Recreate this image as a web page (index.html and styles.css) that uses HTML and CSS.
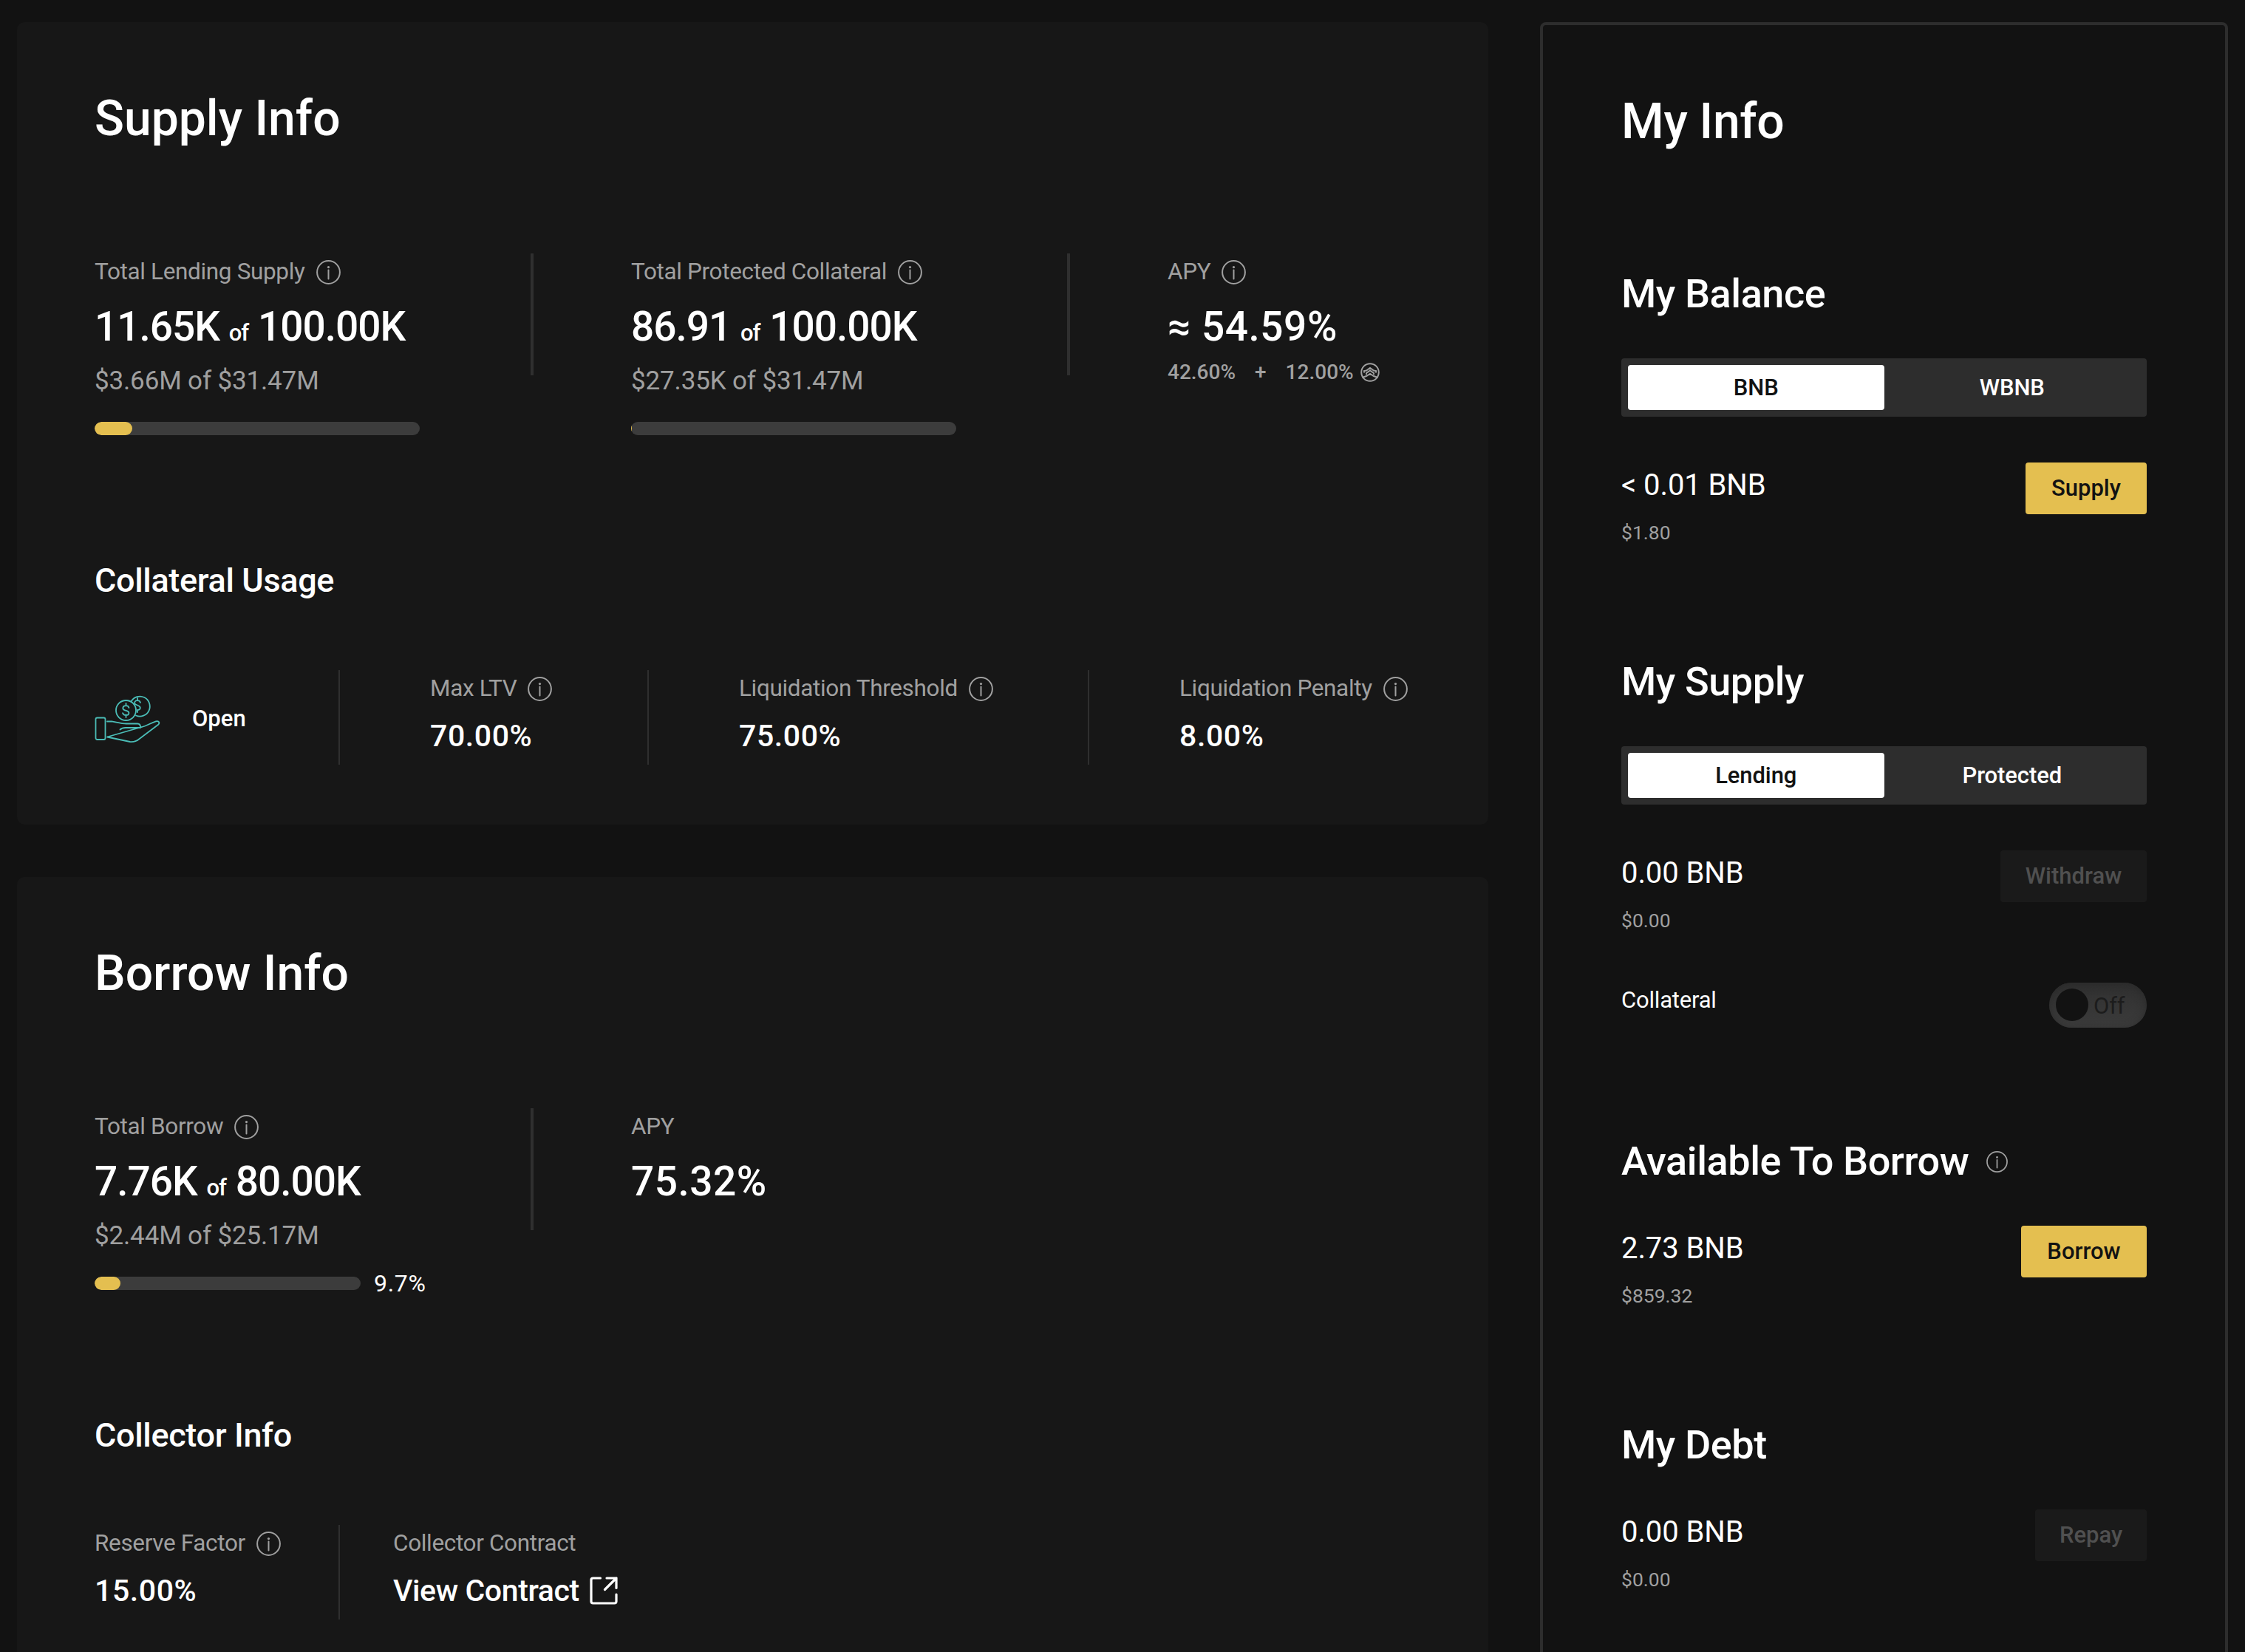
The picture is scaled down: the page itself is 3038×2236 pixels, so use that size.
FILE: index.html
```html
<!DOCTYPE html>
<html lang="en">
<head>
    <meta charset="UTF-8">
    <meta name="viewport" content="width=device-width, initial-scale=1.0">
    <title>BNB Market</title>
    <link rel="stylesheet" href="styles.css">
</head>
<body>
    <svg class="sprite">
        <symbol id="info" viewBox="0 0 33 33">
            <circle cx="16.5" cy="16.5" r="15.4" fill="none" stroke="currentColor" stroke-width="2"/>
            <circle cx="16.5" cy="9.6" r="1.6" fill="currentColor"/>
            <path d="M16.5 13.6v12" stroke="currentColor" stroke-width="2" stroke-linecap="round"/>
        </symbol>
    </svg>
    <div class="page">
        <main class="main">
            <section class="card">
                <h1>Supply Info</h1>
                <div class="stats">
                    <div class="stat">
                        <div class="label">Total Lending Supply <svg class="info"><use href="#info"/></svg></div>
                        <div class="amount">11.65K <small>of</small> 100.00K</div>
                        <div class="usd">$3.66M of $31.47M</div>
                        <div class="progress"><div class="bar"><div class="fill" style="width: 11.65%"></div></div></div>
                    </div>
                    <div class="divider"></div>
                    <div class="stat">
                        <div class="label">Total Protected Collateral <svg class="info"><use href="#info"/></svg></div>
                        <div class="amount">86.91 <small>of</small> 100.00K</div>
                        <div class="usd">$27.35K of $31.47M</div>
                        <div class="progress"><div class="bar"><div class="fill" style="width: 0.09%"></div></div></div>
                    </div>
                    <div class="divider"></div>
                    <div class="stat">
                        <div class="label">APY <svg class="info"><use href="#info"/></svg></div>
                        <div class="amount percent">≈ 54.59%</div>
                        <div class="apy-parts">
                            <span>42.60%</span><span>+</span><span>12.00%</span>
                            <svg class="reward" viewBox="0 0 26 26" fill="none" stroke="currentColor" stroke-width="2">
                                <circle cx="13" cy="13" r="11.8"/>
                                <path d="M5 13.5V11l3-.5 5-3.5 5 3.5 3 .5v2.500M8 16v-2l5-3.500 5 3.500v2M2.500 20l5.500-2 5-3 5 3 5.500 2"/>
                            </svg>
                        </div>
                    </div>
                </div>
                <h3>Collateral Usage</h3>
                <div class="details">
                    <div class="detail status">
                        <svg class="hand" viewBox="0 0 90 66" fill="none" stroke="#4bbdb7" stroke-width="1.8" stroke-linejoin="round" stroke-linecap="round">
                            <rect x="1.500" y="31.500" width="13" height="29.500" rx="2"/>
                            <path d="M17 36.500l6-.2c7 1.200 13 3.200 20 3.200h15c3 0 4.200 1.800 4.200 5.500H42c-4 0-6 1-7.500 2.500M62 44.500c9-2 15-6.500 21-8.200 3.500-1 5.500 1.700 3.500 4.200L60 60.500c-3 2.500-7 4-12 3.500L17 57.500z"/>
                            <circle cx="42.500" cy="21.500" r="13.500"/>
                            <path d="M49.500 9.500a13.500 13.500 0 1 1 6.500 19"/>
                            <path d="M42.500 12v3.200M42.500 27.500V31M46.500 18c-.5-1.800-2-2.800-4-2.800-5 0-5.500 5-1.500 6.200l2.500.7c4.500 1.500 3.500 6-1 6-2.500 0-4-1.200-4.500-3M58 5v3M58 21v3M62 11c-.5-1.800-2-2.800-4-2.800-3.500 0-5 2.800-3 5l4 1.800c4.500 1.800 3 6-.500 6"/>
                        </svg>
                        <span>Open</span>
                    </div>
                    <div class="detail ltv">
                        <div class="label">Max LTV <svg class="info"><use href="#info"/></svg></div>
                        <div class="value">70.00%</div>
                    </div>
                    <div class="detail threshold">
                        <div class="label">Liquidation Threshold <svg class="info"><use href="#info"/></svg></div>
                        <div class="value">75.00%</div>
                    </div>
                    <div class="detail">
                        <div class="label">Liquidation Penalty <svg class="info"><use href="#info"/></svg></div>
                        <div class="value">8.00%</div>
                    </div>
                </div>
            </section>

            <section class="card">
                <h1>Borrow Info</h1>
                <div class="stats">
                    <div class="stat">
                        <div class="label">Total Borrow <svg class="info"><use href="#info"/></svg></div>
                        <div class="amount">7.76K <small>of</small> 80.00K</div>
                        <div class="usd">$2.44M of $25.17M</div>
                        <div class="progress"><div class="bar short"><div class="fill" style="width: 9.7%"></div></div><span>9.7%</span></div>
                    </div>
                    <div class="divider"></div>
                    <div class="stat">
                        <div class="label">APY</div>
                        <div class="amount percent">75.32%</div>
                    </div>
                </div>
                <h3>Collector Info</h3>
                <div class="details">
                    <div class="detail reserve">
                        <div class="label">Reserve Factor <svg class="info"><use href="#info"/></svg></div>
                        <div class="value">15.00%</div>
                    </div>
                    <div class="detail contract">
                        <div class="label">Collector Contract</div>
                        <div class="value link">View Contract
                            <svg class="external" viewBox="0 0 38 38" fill="none" stroke="currentColor" stroke-width="3.200" stroke-linecap="round" stroke-linejoin="round">
                                <path d="M14.500 2H4.500Q2 2 2 4.500V33.500Q2 36 4.500 36H33.500Q36 36 36 33.500V24M23 2H36V15.500M36 2L20.500 17.500"/>
                            </svg>
                        </div>
                    </div>
                </div>
            </section>
        </main>

        <aside class="panel">
            <h1>My Info</h1>

            <h2>My Balance</h2>
            <div class="tabs">
                <div class="tab active">BNB</div>
                <div class="tab">WBNB</div>
            </div>
            <div class="row">
                <div>
                    <div class="balance">&lt; 0.01 BNB</div>
                    <div class="sub">$1.80</div>
                </div>
                <button class="btn supply">Supply</button>
            </div>

            <h2>My Supply</h2>
            <div class="tabs">
                <div class="tab active">Lending</div>
                <div class="tab">Protected</div>
            </div>
            <div class="row">
                <div>
                    <div class="balance">0.00 BNB</div>
                    <div class="sub">$0.00</div>
                </div>
                <button class="btn withdraw" disabled>Withdraw</button>
            </div>
            <div class="row collateral">
                <span>Collateral</span>
                <div class="toggle"><div class="knob"></div>Off</div>
            </div>

            <h2>Available To Borrow <svg class="info"><use href="#info"/></svg></h2>
            <div class="row">
                <div>
                    <div class="balance">2.73 BNB</div>
                    <div class="sub">$859.32</div>
                </div>
                <button class="btn borrow">Borrow</button>
            </div>

            <h2>My Debt</h2>
            <div class="row">
                <div>
                    <div class="balance">0.00 BNB</div>
                    <div class="sub">$0.00</div>
                </div>
                <button class="btn repay" disabled>Repay</button>
            </div>
        </aside>
    </div>
</body>
</html>
```
FILE: styles.css
```css
* {
    box-sizing: border-box;
}
body {
    margin: 0;
    background-color: #121212;
    color: #fff;
    font-family: Roboto, Arial, sans-serif;
    font-size: 32px;
    font-weight: 400;
}
.sprite {
    display: none;
}
.page {
    display: flex;
    gap: 70px;
    height: 2236px;
    padding: 30px 23px 0;
    overflow: hidden;
}
.main {
    width: 1991px;
    flex: none;
}
.card {
    height: 1086px;
    margin-bottom: 71px;
    padding: 91px 0 0 105px;
    background-color: #171717;
    border-radius: 10px;
}
h1, h2, h3 {
    margin: 0;
    font-weight: 500;
    white-space: nowrap;
}
h1 {
    font-size: 66px;
    line-height: 80px;
}
h2 {
    display: flex;
    align-items: center;
    margin: 153px 0 55px;
    font-size: 54px;
    line-height: 64px;
    letter-spacing: -0.4px;
}
h3 {
    font-size: 45px;
    line-height: 52px;
    letter-spacing: -0.35px;
}
.info {
    width: 33px;
    height: 33px;
    margin-left: 15px;
    color: #a0a0a0;
}
h2 .info {
    width: 29px;
    height: 29px;
    margin-left: 24px;
}

/* supply / borrow totals */
.stats {
    display: flex;
    height: 246px;
    margin: 142px 0 171px;
}
.stat {
    width: 590px;
    padding-top: 5px;
    flex: none;
}
.divider {
    width: 4px;
    height: 165px;
    margin-right: 132px;
    background-color: #2f2f2f;
    flex: none;
}
.label {
    display: flex;
    align-items: center;
    font-size: 31.5px;
    line-height: 40px;
    letter-spacing: -0.35px;
    color: #a0a0a0;
    white-space: nowrap;
}
.amount {
    margin-top: 22px;
    font-size: 55px;
    font-weight: 500;
    line-height: 64px;
    letter-spacing: -1px;
    white-space: nowrap;
}
.amount.percent {
    letter-spacing: 0.5px;
}
.amount small {
    font-size: 31px;
    line-height: 1;
}
.usd {
    margin-top: 20px;
    font-size: 35px;
    line-height: 44px;
    letter-spacing: -0.15px;
    color: #a0a0a0;
}
.progress {
    display: flex;
    align-items: center;
    gap: 18px;
    height: 18px;
    margin-top: 33px;
    letter-spacing: 0.7px;
}
.bar {
    width: 440px;
    height: 18px;
    background-color: #3c3c3c;
    border-radius: 9px;
    overflow: hidden;
}
.bar.short {
    width: 360px;
}
.fill {
    height: 100%;
    background-color: #e4bf50;
    border-radius: 9px;
}
.apy-parts {
    display: flex;
    align-items: center;
    margin-top: 12px;
    font-size: 28px;
    font-weight: 500;
    line-height: 36px;
    color: #a0a0a0;
}
.apy-parts span + span {
    margin-left: 26px;
}
.reward {
    width: 26px;
    height: 26px;
    margin-left: 9px;
}

/* collateral / collector details */
.details {
    display: flex;
    height: 128px;
    margin-top: 95px;
}
.detail {
    padding: 5px 0 0 122px;
    border-right: 2px solid #2f2f2f;
}
.detail:last-child {
    border-right: none;
}
.detail .value {
    display: flex;
    align-items: center;
    margin-top: 20px;
    font-size: 41px;
    font-weight: 500;
    line-height: 48px;
    letter-spacing: 0.6px;
    white-space: nowrap;
}
.detail .value.link {
    letter-spacing: -0.4px;
}
.detail.status {
    display: flex;
    align-items: center;
    width: 332px;
    padding: 3px 0 0;
    font-size: 31px;
    font-weight: 500;
}
.detail.ltv {
    width: 418px;
}
.detail.threshold {
    width: 596px;
}
.detail.reserve {
    width: 332px;
    padding-left: 0;
}
.detail.contract {
    padding-left: 72px;
}
.hand {
    width: 90px;
    height: 66px;
    margin-right: 42px;
}
.external {
    width: 38px;
    height: 38px;
    margin-left: 14px;
}

/* right panel */
.panel {
    width: 931px;
    height: 2400px;
    padding: 91px 106px 0;
    border: 4px solid #2d2d2d;
    border-radius: 8px;
    flex: none;
}
.panel h1 {
    letter-spacing: -0.3px;
}
.panel h1 + h2 {
    margin-top: 161px;
}
.tabs {
    display: flex;
    height: 79px;
    margin-bottom: 62px;
    padding: 9px;
    background-color: #2d2d2d;
    border-radius: 4px;
}
.tab {
    flex: 1;
    font-size: 31px;
    font-weight: 500;
    line-height: 61px;
    letter-spacing: -0.1px;
    text-align: center;
}
.tab.active {
    background-color: #fff;
    color: #121212;
    border-radius: 4px;
}
.row {
    display: flex;
    justify-content: space-between;
    align-items: flex-start;
}
.balance {
    padding-top: 7px;
    font-size: 40px;
    line-height: 48px;
    letter-spacing: -0.1px;
}
.sub {
    margin-top: 23px;
    font-size: 26.5px;
    line-height: 34px;
    color: #a0a0a0;
}
.btn {
    height: 70px;
    padding: 0 0 1px;
    border: none;
    border-radius: 4px;
    background-color: #e4bf50;
    color: #121212;
    font-family: inherit;
    font-size: 31px;
    font-weight: 500;
    text-align: center;
    cursor: pointer;
}
.btn:disabled {
    background-color: #1a1a1a;
    color: #505050;
    cursor: default;
}
.btn.supply {
    width: 164px;
}
.btn.withdraw {
    width: 198px;
}
.btn.borrow {
    width: 170px;
}
.btn.repay {
    width: 151px;
}
.collateral {
    margin: 67px 0 -4px;
    font-size: 31px;
    line-height: 40px;
    letter-spacing: -0.2px;
}
.collateral span {
    padding-top: 4px;
}
.toggle {
    display: flex;
    align-items: center;
    gap: 7px;
    width: 132px;
    height: 61px;
    padding: 3px 9px 0;
    border-radius: 31px;
    background: linear-gradient(#303030, #3b3b3b);
    box-shadow: inset 0 3px 12px #2a2a2a;
    color: #1c1c1c;
}
.knob {
    width: 44px;
    height: 44px;
    margin-top: -4px;
    border-radius: 50%;
    background-color: #121212;
}
```
